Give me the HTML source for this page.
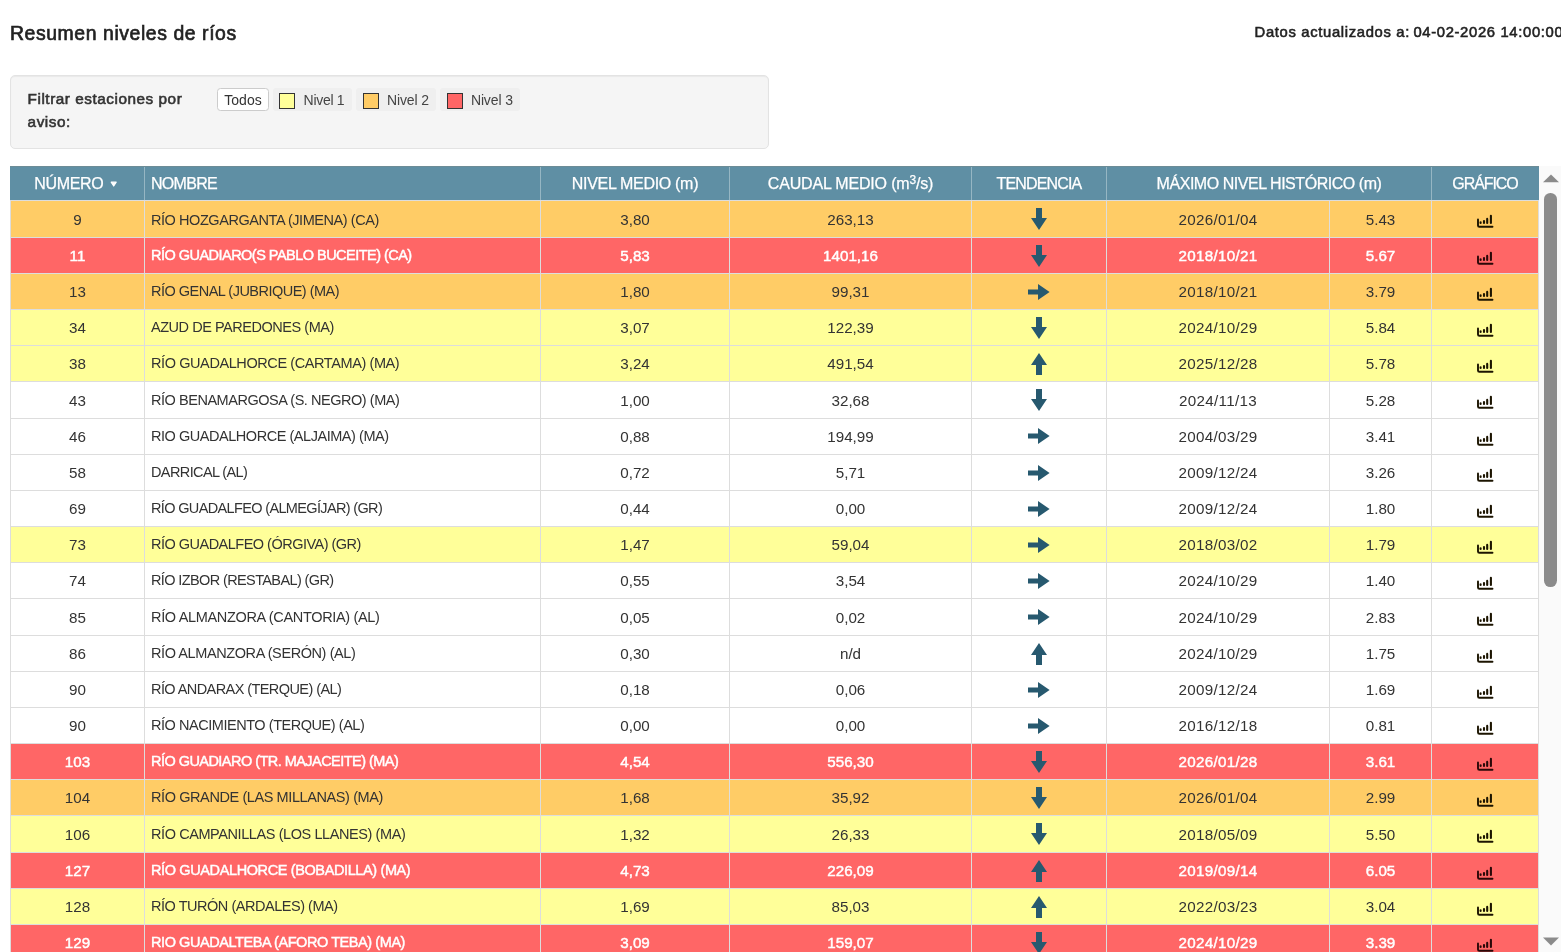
<!DOCTYPE html>
<html lang="es"><head><meta charset="utf-8"><title>Resumen niveles de ríos</title>
<style>
*{box-sizing:border-box;margin:0;padding:0}
html,body{width:1561px;height:952px;overflow:hidden;background:#fff}
body{font-family:"Liberation Sans",sans-serif;color:#333;position:relative;will-change:transform}
.abs{position:absolute;white-space:nowrap}
#title{left:10px;top:21px;font-size:19.4px;line-height:24px;color:#222;-webkit-text-stroke:.65px #222;letter-spacing:.58px}
#stamp,#stamp2{left:1254.6px;top:22.6px;font-size:14.8px;line-height:18px;color:#222;-webkit-text-stroke:.55px #222;letter-spacing:.66px}
#stamp2{left:1413.4px}
#well{left:10px;top:75px;width:759px;height:73.5px;background:#f5f5f5;border:1px solid #e3e3e3;border-radius:5px;box-shadow:inset 0 1px 1px rgba(0,0,0,.05)}
#flt{left:27.6px;top:86.8px;font-size:15.3px;line-height:23px;color:#333;-webkit-text-stroke:.58px #333;white-space:normal;width:200px;letter-spacing:.54px}
#todos{left:217px;top:88px;padding-top:.9px;width:52px;height:23.3px;background:#fff;border:1px solid #ccc;border-radius:3.5px;font-size:14px;line-height:21.3px;text-align:center;color:#333}
.lab{top:88px;height:23.3px;background:#efefef;border-radius:3px;font-size:14px;line-height:23.3px;color:#444}
.lab i{position:absolute;left:5.8px;top:5px;width:16.2px;height:16px;border:1px solid #333;display:block}
.lab span{position:absolute;left:30.6px;top:.9px;letter-spacing:-.3px}
#thead{left:10px;top:166px;width:1529px;height:34px;background:#5f8fa4;border-top:1px solid #6c8c96}
.th{position:absolute;top:0;height:33px;line-height:33px;font-size:16px;color:#fff;text-align:center;border-left:1px solid rgba(255,255,255,.35);white-space:nowrap;letter-spacing:-.35px;-webkit-text-stroke:.25px #fff}
.row{position:absolute;left:10px;width:1529px;border-top:1px solid #ddd;font-size:15.2px;color:#333}
.row.r{color:#fff;-webkit-text-stroke:.45px #fff}
.c{position:absolute;top:0;bottom:0;padding-top:.3px;border-left:1px solid #ddd;text-align:center;white-space:nowrap;overflow:hidden}
.c.n{text-align:left;padding-left:6px;font-size:14.5px}
.o{background:#ffcc66}.r{background:#ff6666}.y{background:#ffff99}.w{background:#fff}
svg{position:absolute;display:block}
#sb{left:1539px;top:166px;width:22px;height:786px;background:#fafafa}
#thumb{left:1544px;top:193px;width:12.7px;height:393.7px;border-radius:6.4px;background:#8b8b8b}
</style></head>
<body>
<div class="abs" id="title">Resumen niveles de ríos</div>
<div class="abs" id="stamp">Datos actualizados a:</div><div class="abs" id="stamp2">04-02-2026 14:00:00</div>
<div class="abs" id="well"></div>
<div class="abs" id="flt">Filtrar estaciones por aviso:</div>
<div class="abs" id="todos">Todos</div>
<div class="abs lab" style="left:273px;width:78.6px"><i style="background:#ffff99;left:5.8px"></i><span style="left:30.6px;letter-spacing:-0.3px">Nivel 1</span></div>
<div class="abs lab" style="left:356px;width:79.5px"><i style="background:#ffcc66;left:6.9px"></i><span style="left:31px;letter-spacing:-0.12px">Nivel 2</span></div>
<div class="abs lab" style="left:440.1px;width:79.5px"><i style="background:#ff6666;left:7px"></i><span style="left:30.8px;letter-spacing:-0.12px">Nivel 3</span></div>
<div class="abs" id="thead">
<div class="th" style="left:0px;width:134px;border-left:0;text-align:left;padding-left:24.3px">NÚMERO<svg width="8" height="6" viewBox="0 0 8 6" style="left:100.2px;top:14px"><path d="M1.2 1.2 L6.2 1.2 L3.7 5 Z" fill="#fff" stroke="#fff" stroke-width="1.2" stroke-linejoin="round"/></svg></div>
<div class="th" style="left:134px;width:396px;text-align:left;padding-left:6px;letter-spacing:-.71px">NOMBRE</div>
<div class="th" style="left:530px;width:189px;letter-spacing:-.31px">NIVEL MEDIO (m)</div>
<div class="th" style="left:719px;width:242px;letter-spacing:-.18px">CAUDAL MEDIO (m<sup style="font-size:12px;line-height:0;vertical-align:5px">3</sup>/s)</div>
<div class="th" style="left:961px;width:135px;letter-spacing:-.84px">TENDENCIA</div>
<div class="th" style="left:1096px;width:325px;letter-spacing:-.46px">MÁXIMO NIVEL HISTÓRICO (m)</div>
<div class="th" style="left:1421px;width:107px;letter-spacing:-1.08px">GRÁFICO</div>
</div>
<div class="row o" style="top:200.00px;height:37.67px;line-height:38.37px">
<div class="c" style="left:0px;width:134px;border-left:1px solid #ddd;">9</div>
<div class="c n" style="left:134px;width:396px;letter-spacing:-0.439px;">RÍO HOZGARGANTA (JIMENA) (CA)</div>
<div class="c" style="left:530px;width:189px;">3,80</div>
<div class="c" style="left:719px;width:242px;">263,13</div>
<div class="c" style="left:961px;width:135px;"><svg width="20" height="24" viewBox="0 0 20 24" style="left:57px;top:6px"><path d="M7 1 H13 V11 H18 L10 23 L2 11 H7 Z" fill="#27596f"/></svg></div>
<div class="c" style="left:1096px;width:223px;letter-spacing:.3px;">2026/01/04</div>
<div class="c" style="left:1319px;width:102px;">5.43</div>
<div class="c" style="left:1421px;width:108px;border-right:1px solid #ddd;"><svg width="18" height="14" viewBox="0 0 18 14" style="left:45px;top:13px"><path d="M1 5.5 V11.4 Q1 12.8 2.4 12.8 H15.5" fill="none" stroke="#1c1400" stroke-width="1.9" stroke-linecap="round"/><path d="M3.6 8.4 V9 M7 7.1 V9 M10.2 4.9 V9 M13.9 1.8 V9" fill="none" stroke="#1c1400" stroke-width="2.1" stroke-linecap="round"/></svg></div>
</div>
<div class="row r" style="top:236.67px;height:37.17px;line-height:35.17px">
<div class="c" style="left:0px;width:134px;border-left:1px solid #ddd;">11</div>
<div class="c n" style="left:134px;width:396px;letter-spacing:-0.524px;">RÍO GUADIARO(S PABLO BUCEITE) (CA)</div>
<div class="c" style="left:530px;width:189px;">5,83</div>
<div class="c" style="left:719px;width:242px;">1401,16</div>
<div class="c" style="left:961px;width:135px;"><svg width="20" height="24" viewBox="0 0 20 24" style="left:57px;top:6px"><path d="M7 1 H13 V11 H18 L10 23 L2 11 H7 Z" fill="#27596f"/></svg></div>
<div class="c" style="left:1096px;width:223px;letter-spacing:.3px;">2018/10/21</div>
<div class="c" style="left:1319px;width:102px;">5.67</div>
<div class="c" style="left:1421px;width:108px;border-right:1px solid #ddd;"><svg width="18" height="14" viewBox="0 0 18 14" style="left:45px;top:13px"><path d="M1 5.5 V11.4 Q1 12.8 2.4 12.8 H15.5" fill="none" stroke="#2a0808" stroke-width="1.9" stroke-linecap="round"/><path d="M3.6 8.4 V9 M7 7.1 V9 M10.2 4.9 V9 M13.9 1.8 V9" fill="none" stroke="#2a0808" stroke-width="2.1" stroke-linecap="round"/></svg></div>
</div>
<div class="row o" style="top:272.83px;height:37.17px;line-height:35.17px">
<div class="c" style="left:0px;width:134px;border-left:1px solid #ddd;">13</div>
<div class="c n" style="left:134px;width:396px;letter-spacing:-0.513px;">RÍO GENAL (JUBRIQUE) (MA)</div>
<div class="c" style="left:530px;width:189px;">1,80</div>
<div class="c" style="left:719px;width:242px;">99,31</div>
<div class="c" style="left:961px;width:135px;"><svg width="24" height="20" viewBox="0 0 24 20" style="left:55.200000000000045px;top:7.9px"><path d="M1 7.5 V12.6 H11 V18 L22.6 10 L11 2 V7.5 Z" fill="#27596f"/></svg></div>
<div class="c" style="left:1096px;width:223px;letter-spacing:.3px;">2018/10/21</div>
<div class="c" style="left:1319px;width:102px;">3.79</div>
<div class="c" style="left:1421px;width:108px;border-right:1px solid #ddd;"><svg width="18" height="14" viewBox="0 0 18 14" style="left:45px;top:13px"><path d="M1 5.5 V11.4 Q1 12.8 2.4 12.8 H15.5" fill="none" stroke="#1c1400" stroke-width="1.9" stroke-linecap="round"/><path d="M3.6 8.4 V9 M7 7.1 V9 M10.2 4.9 V9 M13.9 1.8 V9" fill="none" stroke="#1c1400" stroke-width="2.1" stroke-linecap="round"/></svg></div>
</div>
<div class="row y" style="top:309.00px;height:37.17px;line-height:35.17px">
<div class="c" style="left:0px;width:134px;border-left:1px solid #ddd;">34</div>
<div class="c n" style="left:134px;width:396px;letter-spacing:-0.467px;">AZUD DE PAREDONES (MA)</div>
<div class="c" style="left:530px;width:189px;">3,07</div>
<div class="c" style="left:719px;width:242px;">122,39</div>
<div class="c" style="left:961px;width:135px;"><svg width="20" height="24" viewBox="0 0 20 24" style="left:57px;top:6px"><path d="M7 1 H13 V11 H18 L10 23 L2 11 H7 Z" fill="#27596f"/></svg></div>
<div class="c" style="left:1096px;width:223px;letter-spacing:.3px;">2024/10/29</div>
<div class="c" style="left:1319px;width:102px;">5.84</div>
<div class="c" style="left:1421px;width:108px;border-right:1px solid #ddd;"><svg width="18" height="14" viewBox="0 0 18 14" style="left:45px;top:13px"><path d="M1 5.5 V11.4 Q1 12.8 2.4 12.8 H15.5" fill="none" stroke="#1c1400" stroke-width="1.9" stroke-linecap="round"/><path d="M3.6 8.4 V9 M7 7.1 V9 M10.2 4.9 V9 M13.9 1.8 V9" fill="none" stroke="#1c1400" stroke-width="2.1" stroke-linecap="round"/></svg></div>
</div>
<div class="row y" style="top:345.17px;height:37.17px;line-height:35.17px">
<div class="c" style="left:0px;width:134px;border-left:1px solid #ddd;">38</div>
<div class="c n" style="left:134px;width:396px;letter-spacing:-0.407px;">RÍO GUADALHORCE (CARTAMA) (MA)</div>
<div class="c" style="left:530px;width:189px;">3,24</div>
<div class="c" style="left:719px;width:242px;">491,54</div>
<div class="c" style="left:961px;width:135px;"><svg width="20" height="24" viewBox="0 0 20 24" style="left:57px;top:6px"><path d="M7 23 H13 V13 H18 L10 1 L2 13 H7 Z" fill="#27596f"/></svg></div>
<div class="c" style="left:1096px;width:223px;letter-spacing:.3px;">2025/12/28</div>
<div class="c" style="left:1319px;width:102px;">5.78</div>
<div class="c" style="left:1421px;width:108px;border-right:1px solid #ddd;"><svg width="18" height="14" viewBox="0 0 18 14" style="left:45px;top:13px"><path d="M1 5.5 V11.4 Q1 12.8 2.4 12.8 H15.5" fill="none" stroke="#1c1400" stroke-width="1.9" stroke-linecap="round"/><path d="M3.6 8.4 V9 M7 7.1 V9 M10.2 4.9 V9 M13.9 1.8 V9" fill="none" stroke="#1c1400" stroke-width="2.1" stroke-linecap="round"/></svg></div>
</div>
<div class="row w" style="top:381.33px;height:37.17px;line-height:35.17px">
<div class="c" style="left:0px;width:134px;border-left:1px solid #ddd;">43</div>
<div class="c n" style="left:134px;width:396px;letter-spacing:-0.46px;">RÍO BENAMARGOSA (S. NEGRO) (MA)</div>
<div class="c" style="left:530px;width:189px;">1,00</div>
<div class="c" style="left:719px;width:242px;">32,68</div>
<div class="c" style="left:961px;width:135px;"><svg width="20" height="24" viewBox="0 0 20 24" style="left:57px;top:6px"><path d="M7 1 H13 V11 H18 L10 23 L2 11 H7 Z" fill="#27596f"/></svg></div>
<div class="c" style="left:1096px;width:223px;letter-spacing:.3px;">2024/11/13</div>
<div class="c" style="left:1319px;width:102px;">5.28</div>
<div class="c" style="left:1421px;width:108px;border-right:1px solid #ddd;"><svg width="18" height="14" viewBox="0 0 18 14" style="left:45px;top:13px"><path d="M1 5.5 V11.4 Q1 12.8 2.4 12.8 H15.5" fill="none" stroke="#1c1400" stroke-width="1.9" stroke-linecap="round"/><path d="M3.6 8.4 V9 M7 7.1 V9 M10.2 4.9 V9 M13.9 1.8 V9" fill="none" stroke="#1c1400" stroke-width="2.1" stroke-linecap="round"/></svg></div>
</div>
<div class="row w" style="top:417.50px;height:37.17px;line-height:35.17px">
<div class="c" style="left:0px;width:134px;border-left:1px solid #ddd;">46</div>
<div class="c n" style="left:134px;width:396px;letter-spacing:-0.459px;">RIO GUADALHORCE (ALJAIMA) (MA)</div>
<div class="c" style="left:530px;width:189px;">0,88</div>
<div class="c" style="left:719px;width:242px;">194,99</div>
<div class="c" style="left:961px;width:135px;"><svg width="24" height="20" viewBox="0 0 24 20" style="left:55.200000000000045px;top:7.9px"><path d="M1 7.5 V12.6 H11 V18 L22.6 10 L11 2 V7.5 Z" fill="#27596f"/></svg></div>
<div class="c" style="left:1096px;width:223px;letter-spacing:.3px;">2004/03/29</div>
<div class="c" style="left:1319px;width:102px;">3.41</div>
<div class="c" style="left:1421px;width:108px;border-right:1px solid #ddd;"><svg width="18" height="14" viewBox="0 0 18 14" style="left:45px;top:13px"><path d="M1 5.5 V11.4 Q1 12.8 2.4 12.8 H15.5" fill="none" stroke="#1c1400" stroke-width="1.9" stroke-linecap="round"/><path d="M3.6 8.4 V9 M7 7.1 V9 M10.2 4.9 V9 M13.9 1.8 V9" fill="none" stroke="#1c1400" stroke-width="2.1" stroke-linecap="round"/></svg></div>
</div>
<div class="row w" style="top:453.67px;height:37.17px;line-height:35.17px">
<div class="c" style="left:0px;width:134px;border-left:1px solid #ddd;">58</div>
<div class="c n" style="left:134px;width:396px;letter-spacing:-0.608px;">DARRICAL (AL)</div>
<div class="c" style="left:530px;width:189px;">0,72</div>
<div class="c" style="left:719px;width:242px;">5,71</div>
<div class="c" style="left:961px;width:135px;"><svg width="24" height="20" viewBox="0 0 24 20" style="left:55.200000000000045px;top:7.9px"><path d="M1 7.5 V12.6 H11 V18 L22.6 10 L11 2 V7.5 Z" fill="#27596f"/></svg></div>
<div class="c" style="left:1096px;width:223px;letter-spacing:.3px;">2009/12/24</div>
<div class="c" style="left:1319px;width:102px;">3.26</div>
<div class="c" style="left:1421px;width:108px;border-right:1px solid #ddd;"><svg width="18" height="14" viewBox="0 0 18 14" style="left:45px;top:13px"><path d="M1 5.5 V11.4 Q1 12.8 2.4 12.8 H15.5" fill="none" stroke="#1c1400" stroke-width="1.9" stroke-linecap="round"/><path d="M3.6 8.4 V9 M7 7.1 V9 M10.2 4.9 V9 M13.9 1.8 V9" fill="none" stroke="#1c1400" stroke-width="2.1" stroke-linecap="round"/></svg></div>
</div>
<div class="row w" style="top:489.83px;height:37.17px;line-height:35.17px">
<div class="c" style="left:0px;width:134px;border-left:1px solid #ddd;">69</div>
<div class="c n" style="left:134px;width:396px;letter-spacing:-0.648px;">RÍO GUADALFEO (ALMEGÍJAR) (GR)</div>
<div class="c" style="left:530px;width:189px;">0,44</div>
<div class="c" style="left:719px;width:242px;">0,00</div>
<div class="c" style="left:961px;width:135px;"><svg width="24" height="20" viewBox="0 0 24 20" style="left:55.200000000000045px;top:7.9px"><path d="M1 7.5 V12.6 H11 V18 L22.6 10 L11 2 V7.5 Z" fill="#27596f"/></svg></div>
<div class="c" style="left:1096px;width:223px;letter-spacing:.3px;">2009/12/24</div>
<div class="c" style="left:1319px;width:102px;">1.80</div>
<div class="c" style="left:1421px;width:108px;border-right:1px solid #ddd;"><svg width="18" height="14" viewBox="0 0 18 14" style="left:45px;top:13px"><path d="M1 5.5 V11.4 Q1 12.8 2.4 12.8 H15.5" fill="none" stroke="#1c1400" stroke-width="1.9" stroke-linecap="round"/><path d="M3.6 8.4 V9 M7 7.1 V9 M10.2 4.9 V9 M13.9 1.8 V9" fill="none" stroke="#1c1400" stroke-width="2.1" stroke-linecap="round"/></svg></div>
</div>
<div class="row y" style="top:526.00px;height:37.17px;line-height:35.17px">
<div class="c" style="left:0px;width:134px;border-left:1px solid #ddd;">73</div>
<div class="c n" style="left:134px;width:396px;letter-spacing:-0.512px;">RÍO GUADALFEO (ÓRGIVA) (GR)</div>
<div class="c" style="left:530px;width:189px;">1,47</div>
<div class="c" style="left:719px;width:242px;">59,04</div>
<div class="c" style="left:961px;width:135px;"><svg width="24" height="20" viewBox="0 0 24 20" style="left:55.200000000000045px;top:7.9px"><path d="M1 7.5 V12.6 H11 V18 L22.6 10 L11 2 V7.5 Z" fill="#27596f"/></svg></div>
<div class="c" style="left:1096px;width:223px;letter-spacing:.3px;">2018/03/02</div>
<div class="c" style="left:1319px;width:102px;">1.79</div>
<div class="c" style="left:1421px;width:108px;border-right:1px solid #ddd;"><svg width="18" height="14" viewBox="0 0 18 14" style="left:45px;top:13px"><path d="M1 5.5 V11.4 Q1 12.8 2.4 12.8 H15.5" fill="none" stroke="#1c1400" stroke-width="1.9" stroke-linecap="round"/><path d="M3.6 8.4 V9 M7 7.1 V9 M10.2 4.9 V9 M13.9 1.8 V9" fill="none" stroke="#1c1400" stroke-width="2.1" stroke-linecap="round"/></svg></div>
</div>
<div class="row w" style="top:562.17px;height:37.17px;line-height:35.17px">
<div class="c" style="left:0px;width:134px;border-left:1px solid #ddd;">74</div>
<div class="c n" style="left:134px;width:396px;letter-spacing:-0.617px;">RÍO IZBOR (RESTABAL) (GR)</div>
<div class="c" style="left:530px;width:189px;">0,55</div>
<div class="c" style="left:719px;width:242px;">3,54</div>
<div class="c" style="left:961px;width:135px;"><svg width="24" height="20" viewBox="0 0 24 20" style="left:55.200000000000045px;top:7.9px"><path d="M1 7.5 V12.6 H11 V18 L22.6 10 L11 2 V7.5 Z" fill="#27596f"/></svg></div>
<div class="c" style="left:1096px;width:223px;letter-spacing:.3px;">2024/10/29</div>
<div class="c" style="left:1319px;width:102px;">1.40</div>
<div class="c" style="left:1421px;width:108px;border-right:1px solid #ddd;"><svg width="18" height="14" viewBox="0 0 18 14" style="left:45px;top:13px"><path d="M1 5.5 V11.4 Q1 12.8 2.4 12.8 H15.5" fill="none" stroke="#1c1400" stroke-width="1.9" stroke-linecap="round"/><path d="M3.6 8.4 V9 M7 7.1 V9 M10.2 4.9 V9 M13.9 1.8 V9" fill="none" stroke="#1c1400" stroke-width="2.1" stroke-linecap="round"/></svg></div>
</div>
<div class="row w" style="top:598.33px;height:37.17px;line-height:35.17px">
<div class="c" style="left:0px;width:134px;border-left:1px solid #ddd;">85</div>
<div class="c n" style="left:134px;width:396px;letter-spacing:-0.332px;">RÍO ALMANZORA (CANTORIA) (AL)</div>
<div class="c" style="left:530px;width:189px;">0,05</div>
<div class="c" style="left:719px;width:242px;">0,02</div>
<div class="c" style="left:961px;width:135px;"><svg width="24" height="20" viewBox="0 0 24 20" style="left:55.200000000000045px;top:7.9px"><path d="M1 7.5 V12.6 H11 V18 L22.6 10 L11 2 V7.5 Z" fill="#27596f"/></svg></div>
<div class="c" style="left:1096px;width:223px;letter-spacing:.3px;">2024/10/29</div>
<div class="c" style="left:1319px;width:102px;">2.83</div>
<div class="c" style="left:1421px;width:108px;border-right:1px solid #ddd;"><svg width="18" height="14" viewBox="0 0 18 14" style="left:45px;top:13px"><path d="M1 5.5 V11.4 Q1 12.8 2.4 12.8 H15.5" fill="none" stroke="#1c1400" stroke-width="1.9" stroke-linecap="round"/><path d="M3.6 8.4 V9 M7 7.1 V9 M10.2 4.9 V9 M13.9 1.8 V9" fill="none" stroke="#1c1400" stroke-width="2.1" stroke-linecap="round"/></svg></div>
</div>
<div class="row w" style="top:634.50px;height:37.17px;line-height:35.17px">
<div class="c" style="left:0px;width:134px;border-left:1px solid #ddd;">86</div>
<div class="c n" style="left:134px;width:396px;letter-spacing:-0.412px;">RÍO ALMANZORA (SERÓN) (AL)</div>
<div class="c" style="left:530px;width:189px;">0,30</div>
<div class="c" style="left:719px;width:242px;">n/d</div>
<div class="c" style="left:961px;width:135px;"><svg width="20" height="24" viewBox="0 0 20 24" style="left:57px;top:6px"><path d="M7 23 H13 V13 H18 L10 1 L2 13 H7 Z" fill="#27596f"/></svg></div>
<div class="c" style="left:1096px;width:223px;letter-spacing:.3px;">2024/10/29</div>
<div class="c" style="left:1319px;width:102px;">1.75</div>
<div class="c" style="left:1421px;width:108px;border-right:1px solid #ddd;"><svg width="18" height="14" viewBox="0 0 18 14" style="left:45px;top:13px"><path d="M1 5.5 V11.4 Q1 12.8 2.4 12.8 H15.5" fill="none" stroke="#1c1400" stroke-width="1.9" stroke-linecap="round"/><path d="M3.6 8.4 V9 M7 7.1 V9 M10.2 4.9 V9 M13.9 1.8 V9" fill="none" stroke="#1c1400" stroke-width="2.1" stroke-linecap="round"/></svg></div>
</div>
<div class="row w" style="top:670.67px;height:37.17px;line-height:35.17px">
<div class="c" style="left:0px;width:134px;border-left:1px solid #ddd;">90</div>
<div class="c n" style="left:134px;width:396px;letter-spacing:-0.575px;">RÍO ANDARAX (TERQUE) (AL)</div>
<div class="c" style="left:530px;width:189px;">0,18</div>
<div class="c" style="left:719px;width:242px;">0,06</div>
<div class="c" style="left:961px;width:135px;"><svg width="24" height="20" viewBox="0 0 24 20" style="left:55.200000000000045px;top:7.9px"><path d="M1 7.5 V12.6 H11 V18 L22.6 10 L11 2 V7.5 Z" fill="#27596f"/></svg></div>
<div class="c" style="left:1096px;width:223px;letter-spacing:.3px;">2009/12/24</div>
<div class="c" style="left:1319px;width:102px;">1.69</div>
<div class="c" style="left:1421px;width:108px;border-right:1px solid #ddd;"><svg width="18" height="14" viewBox="0 0 18 14" style="left:45px;top:13px"><path d="M1 5.5 V11.4 Q1 12.8 2.4 12.8 H15.5" fill="none" stroke="#1c1400" stroke-width="1.9" stroke-linecap="round"/><path d="M3.6 8.4 V9 M7 7.1 V9 M10.2 4.9 V9 M13.9 1.8 V9" fill="none" stroke="#1c1400" stroke-width="2.1" stroke-linecap="round"/></svg></div>
</div>
<div class="row w" style="top:706.83px;height:37.17px;line-height:35.17px">
<div class="c" style="left:0px;width:134px;border-left:1px solid #ddd;">90</div>
<div class="c n" style="left:134px;width:396px;letter-spacing:-0.456px;">RÍO NACIMIENTO (TERQUE) (AL)</div>
<div class="c" style="left:530px;width:189px;">0,00</div>
<div class="c" style="left:719px;width:242px;">0,00</div>
<div class="c" style="left:961px;width:135px;"><svg width="24" height="20" viewBox="0 0 24 20" style="left:55.200000000000045px;top:7.9px"><path d="M1 7.5 V12.6 H11 V18 L22.6 10 L11 2 V7.5 Z" fill="#27596f"/></svg></div>
<div class="c" style="left:1096px;width:223px;letter-spacing:.3px;">2016/12/18</div>
<div class="c" style="left:1319px;width:102px;">0.81</div>
<div class="c" style="left:1421px;width:108px;border-right:1px solid #ddd;"><svg width="18" height="14" viewBox="0 0 18 14" style="left:45px;top:13px"><path d="M1 5.5 V11.4 Q1 12.8 2.4 12.8 H15.5" fill="none" stroke="#1c1400" stroke-width="1.9" stroke-linecap="round"/><path d="M3.6 8.4 V9 M7 7.1 V9 M10.2 4.9 V9 M13.9 1.8 V9" fill="none" stroke="#1c1400" stroke-width="2.1" stroke-linecap="round"/></svg></div>
</div>
<div class="row r" style="top:743.00px;height:37.17px;line-height:35.17px">
<div class="c" style="left:0px;width:134px;border-left:1px solid #ddd;">103</div>
<div class="c n" style="left:134px;width:396px;letter-spacing:-0.541px;">RÍO GUADIARO (TR. MAJACEITE) (MA)</div>
<div class="c" style="left:530px;width:189px;">4,54</div>
<div class="c" style="left:719px;width:242px;">556,30</div>
<div class="c" style="left:961px;width:135px;"><svg width="20" height="24" viewBox="0 0 20 24" style="left:57px;top:6px"><path d="M7 1 H13 V11 H18 L10 23 L2 11 H7 Z" fill="#27596f"/></svg></div>
<div class="c" style="left:1096px;width:223px;letter-spacing:.3px;">2026/01/28</div>
<div class="c" style="left:1319px;width:102px;">3.61</div>
<div class="c" style="left:1421px;width:108px;border-right:1px solid #ddd;"><svg width="18" height="14" viewBox="0 0 18 14" style="left:45px;top:13px"><path d="M1 5.5 V11.4 Q1 12.8 2.4 12.8 H15.5" fill="none" stroke="#2a0808" stroke-width="1.9" stroke-linecap="round"/><path d="M3.6 8.4 V9 M7 7.1 V9 M10.2 4.9 V9 M13.9 1.8 V9" fill="none" stroke="#2a0808" stroke-width="2.1" stroke-linecap="round"/></svg></div>
</div>
<div class="row o" style="top:779.17px;height:37.17px;line-height:35.17px">
<div class="c" style="left:0px;width:134px;border-left:1px solid #ddd;">104</div>
<div class="c n" style="left:134px;width:396px;letter-spacing:-0.407px;">RÍO GRANDE (LAS MILLANAS) (MA)</div>
<div class="c" style="left:530px;width:189px;">1,68</div>
<div class="c" style="left:719px;width:242px;">35,92</div>
<div class="c" style="left:961px;width:135px;"><svg width="20" height="24" viewBox="0 0 20 24" style="left:57px;top:6px"><path d="M7 1 H13 V11 H18 L10 23 L2 11 H7 Z" fill="#27596f"/></svg></div>
<div class="c" style="left:1096px;width:223px;letter-spacing:.3px;">2026/01/04</div>
<div class="c" style="left:1319px;width:102px;">2.99</div>
<div class="c" style="left:1421px;width:108px;border-right:1px solid #ddd;"><svg width="18" height="14" viewBox="0 0 18 14" style="left:45px;top:13px"><path d="M1 5.5 V11.4 Q1 12.8 2.4 12.8 H15.5" fill="none" stroke="#1c1400" stroke-width="1.9" stroke-linecap="round"/><path d="M3.6 8.4 V9 M7 7.1 V9 M10.2 4.9 V9 M13.9 1.8 V9" fill="none" stroke="#1c1400" stroke-width="2.1" stroke-linecap="round"/></svg></div>
</div>
<div class="row y" style="top:815.33px;height:37.17px;line-height:35.17px">
<div class="c" style="left:0px;width:134px;border-left:1px solid #ddd;">106</div>
<div class="c n" style="left:134px;width:396px;letter-spacing:-0.416px;">RÍO CAMPANILLAS (LOS LLANES) (MA)</div>
<div class="c" style="left:530px;width:189px;">1,32</div>
<div class="c" style="left:719px;width:242px;">26,33</div>
<div class="c" style="left:961px;width:135px;"><svg width="20" height="24" viewBox="0 0 20 24" style="left:57px;top:6px"><path d="M7 1 H13 V11 H18 L10 23 L2 11 H7 Z" fill="#27596f"/></svg></div>
<div class="c" style="left:1096px;width:223px;letter-spacing:.3px;">2018/05/09</div>
<div class="c" style="left:1319px;width:102px;">5.50</div>
<div class="c" style="left:1421px;width:108px;border-right:1px solid #ddd;"><svg width="18" height="14" viewBox="0 0 18 14" style="left:45px;top:13px"><path d="M1 5.5 V11.4 Q1 12.8 2.4 12.8 H15.5" fill="none" stroke="#1c1400" stroke-width="1.9" stroke-linecap="round"/><path d="M3.6 8.4 V9 M7 7.1 V9 M10.2 4.9 V9 M13.9 1.8 V9" fill="none" stroke="#1c1400" stroke-width="2.1" stroke-linecap="round"/></svg></div>
</div>
<div class="row r" style="top:851.50px;height:37.17px;line-height:35.17px">
<div class="c" style="left:0px;width:134px;border-left:1px solid #ddd;">127</div>
<div class="c n" style="left:134px;width:396px;letter-spacing:-0.381px;">RÍO GUADALHORCE (BOBADILLA) (MA)</div>
<div class="c" style="left:530px;width:189px;">4,73</div>
<div class="c" style="left:719px;width:242px;">226,09</div>
<div class="c" style="left:961px;width:135px;"><svg width="20" height="24" viewBox="0 0 20 24" style="left:57px;top:6px"><path d="M7 23 H13 V13 H18 L10 1 L2 13 H7 Z" fill="#27596f"/></svg></div>
<div class="c" style="left:1096px;width:223px;letter-spacing:.3px;">2019/09/14</div>
<div class="c" style="left:1319px;width:102px;">6.05</div>
<div class="c" style="left:1421px;width:108px;border-right:1px solid #ddd;"><svg width="18" height="14" viewBox="0 0 18 14" style="left:45px;top:13px"><path d="M1 5.5 V11.4 Q1 12.8 2.4 12.8 H15.5" fill="none" stroke="#2a0808" stroke-width="1.9" stroke-linecap="round"/><path d="M3.6 8.4 V9 M7 7.1 V9 M10.2 4.9 V9 M13.9 1.8 V9" fill="none" stroke="#2a0808" stroke-width="2.1" stroke-linecap="round"/></svg></div>
</div>
<div class="row y" style="top:887.67px;height:37.17px;line-height:35.17px">
<div class="c" style="left:0px;width:134px;border-left:1px solid #ddd;">128</div>
<div class="c n" style="left:134px;width:396px;letter-spacing:-0.47px;">RÍO TURÓN (ARDALES) (MA)</div>
<div class="c" style="left:530px;width:189px;">1,69</div>
<div class="c" style="left:719px;width:242px;">85,03</div>
<div class="c" style="left:961px;width:135px;"><svg width="20" height="24" viewBox="0 0 20 24" style="left:57px;top:6px"><path d="M7 23 H13 V13 H18 L10 1 L2 13 H7 Z" fill="#27596f"/></svg></div>
<div class="c" style="left:1096px;width:223px;letter-spacing:.3px;">2022/03/23</div>
<div class="c" style="left:1319px;width:102px;">3.04</div>
<div class="c" style="left:1421px;width:108px;border-right:1px solid #ddd;"><svg width="18" height="14" viewBox="0 0 18 14" style="left:45px;top:13px"><path d="M1 5.5 V11.4 Q1 12.8 2.4 12.8 H15.5" fill="none" stroke="#1c1400" stroke-width="1.9" stroke-linecap="round"/><path d="M3.6 8.4 V9 M7 7.1 V9 M10.2 4.9 V9 M13.9 1.8 V9" fill="none" stroke="#1c1400" stroke-width="2.1" stroke-linecap="round"/></svg></div>
</div>
<div class="row r" style="top:923.83px;height:37.17px;line-height:35.17px">
<div class="c" style="left:0px;width:134px;border-left:1px solid #ddd;">129</div>
<div class="c n" style="left:134px;width:396px;letter-spacing:-0.429px;">RIO GUADALTEBA (AFORO TEBA) (MA)</div>
<div class="c" style="left:530px;width:189px;">3,09</div>
<div class="c" style="left:719px;width:242px;">159,07</div>
<div class="c" style="left:961px;width:135px;"><svg width="20" height="24" viewBox="0 0 20 24" style="left:57px;top:6px"><path d="M7 1 H13 V11 H18 L10 23 L2 11 H7 Z" fill="#27596f"/></svg></div>
<div class="c" style="left:1096px;width:223px;letter-spacing:.3px;">2024/10/29</div>
<div class="c" style="left:1319px;width:102px;">3.39</div>
<div class="c" style="left:1421px;width:108px;border-right:1px solid #ddd;"><svg width="18" height="14" viewBox="0 0 18 14" style="left:45px;top:13px"><path d="M1 5.5 V11.4 Q1 12.8 2.4 12.8 H15.5" fill="none" stroke="#2a0808" stroke-width="1.9" stroke-linecap="round"/><path d="M3.6 8.4 V9 M7 7.1 V9 M10.2 4.9 V9 M13.9 1.8 V9" fill="none" stroke="#2a0808" stroke-width="2.1" stroke-linecap="round"/></svg></div>
</div>
<div class="abs" id="sb"></div><div class="abs" id="thumb"></div>
<svg width="16" height="9" viewBox="0 0 16 9" style="left:1542.8px;top:173.6px"><path d="M0 8.2 L8 0.4 L16 8.2 Z" fill="#8b8b8b"/></svg>
<svg width="16" height="9" viewBox="0 0 16 9" style="left:1542.8px;top:936.6px"><path d="M0 0.4 L8 8.4 L16 0.4 Z" fill="#8b8b8b"/></svg>
</body></html>
